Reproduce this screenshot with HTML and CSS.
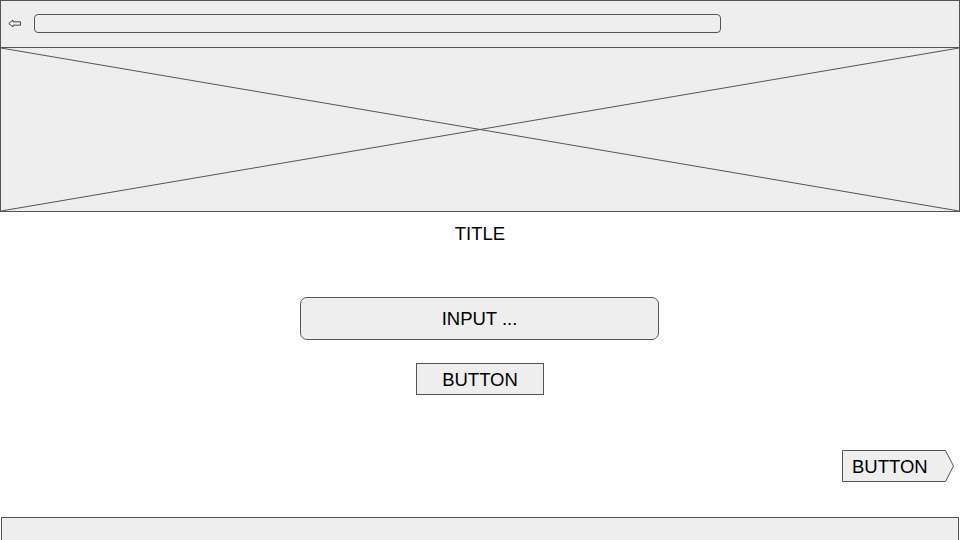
FILE: index.html
```html
<!DOCTYPE html>
<html>
<head>
<meta charset="utf-8">
<link rel="stylesheet" href="styles.css">
</head>
<body>
<div class="page">
  <header class="topbar">
    <svg class="back" width="14" height="9" viewBox="0 0 14 9"><path d="M0.8 4.5 L5 1 L5 2.8 L12.5 2.8 L12.5 6.2 L5 6.2 L5 8 Z" fill="none" stroke="#333" stroke-width="0.9" stroke-linejoin="round"/></svg>
    <div class="address"></div>
  </header>
  <div class="hero">
    <svg class="cross" viewBox="0 0 100 100" preserveAspectRatio="none"><line x1="0" y1="0" x2="100" y2="100" vector-effect="non-scaling-stroke"/><line x1="100" y1="0" x2="0" y2="100" vector-effect="non-scaling-stroke"/></svg>
  </div>
  <div class="title">TITLE</div>
  <div class="input">INPUT ...</div>
  <div class="button">BUTTON</div>
  <div class="row-right">
    <div class="next">
      <svg class="next-shape" width="112" height="32" viewBox="0 0 112 32"><polygon points="0.5,0.5 103.5,0.5 111.5,16 103.5,31.5 0.5,31.5" fill="#eeeeee" stroke="#555" stroke-width="1"/></svg>
      <span class="next-label">BUTTON</span>
    </div>
  </div>
  <footer class="footer"></footer>
</div>
</body>
</html>
```
FILE: styles.css
```css
html, body {
  margin: 0;
  padding: 0;
  background: #ffffff;
}
body {
  width: 960px;
  height: 540px;
  overflow: hidden;
  font-family: "Liberation Sans", Arial, sans-serif;
  color: #000;
}
.page {
  display: flex;
  flex-direction: column;
  align-items: center;
}
.topbar {
  box-sizing: border-box;
  width: 960px;
  height: 48px;
  border: 1px solid #555;
  background: #eeeeee;
  display: flex;
  align-items: center;
  padding-left: 7px;
  padding-bottom: 2px;
}
.back {
  display: block;
  margin-top: 1px;
}
.address {
  box-sizing: border-box;
  margin-left: 12px;
  width: 687px;
  height: 19px;
  border: 1px solid #555;
  border-radius: 4px;
  background: #eeeeee;
}
.hero {
  box-sizing: border-box;
  width: 960px;
  height: 165px;
  margin-top: -1px;
  border: 1px solid #555;
  background: #eeeeee;
  position: relative;
}
.cross {
  position: absolute;
  left: 0;
  top: 0;
  width: 100%;
  height: 100%;
  display: block;
}
.cross line {
  stroke: #555;
  stroke-width: 1;
}
.title {
  margin-top: 11px;
  font-size: 18.5px;
  line-height: 21px;
}
.input {
  box-sizing: border-box;
  margin-top: 53px;
  margin-right: 1px;
  width: 359px;
  height: 43px;
  padding-top: 1px;
  border: 1px solid #555;
  border-radius: 7px;
  background: #eeeeee;
  display: flex;
  align-items: center;
  justify-content: center;
  font-size: 18.5px;
}
.button {
  box-sizing: border-box;
  margin-top: 23px;
  width: 128px;
  height: 32px;
  padding-top: 2px;
  border: 1px solid #555;
  background: #eeeeee;
  display: flex;
  align-items: center;
  justify-content: center;
  font-size: 18.5px;
}
.row-right {
  align-self: stretch;
  display: flex;
  justify-content: flex-end;
  padding-right: 6px;
  margin-top: 55px;
}
.next {
  position: relative;
  width: 112px;
  height: 32px;
  padding-top: 2px;
  box-sizing: border-box;
  display: flex;
  align-items: center;
  font-size: 18.5px;
}
.next-shape {
  position: absolute;
  left: 0;
  top: 0;
  display: block;
}
.next-label {
  position: relative;
  padding-left: 10px;
}
.footer {
  box-sizing: border-box;
  margin-top: 35px;
  width: 958px;
  height: 30px;
  border: 1px solid #555;
  background: #eeeeee;
}
```
